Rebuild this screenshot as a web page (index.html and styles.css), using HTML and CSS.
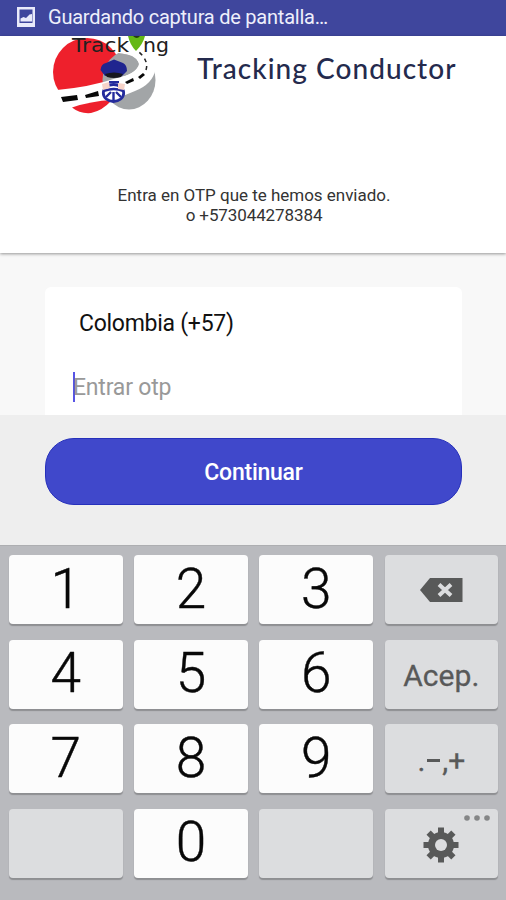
FILE: index.html
```html
<!DOCTYPE html>
<html lang="es">
<head>
<meta charset="utf-8">
<title>Tracking Conductor</title>
<link rel="stylesheet" href="styles.css">
</head>
<body>
<div class="status">
  <svg class="status-icon" width="20" height="22" viewBox="0 0 20 22"><path fill="#e9eafa" fill-rule="evenodd" d="M1 1h18v20H1z M3.500 3.500v13.500h13V3.500z"/><path fill="#e9eafa" d="M4.500 15.500v-3l3-1.500 2.500 1 3.500-3.500 2.500-.5v7.500z"/></svg>
  <span class="status-text">Guardando captura de pantalla…</span>
</div>
<header class="header">
  <div class="brand">
    <svg class="logo" width="124" height="80" viewBox="50 36 124 80">
      <circle cx="87" cy="72" r="34" fill="#ee202c"/>
      <ellipse cx="129" cy="80" rx="26.500" ry="29.500" fill="#a2a5a7"/>
      <path d="M117 36H174V80L155.500 69Q153 84 135 91Q120 98 104 102L108 111L50 120V92.500L57 90Q90 87 117 78Q137 73 139 64Q136 55 118 53L113 48Z" fill="#fff"/>
      <path d="M118 54Q134 53 138 62Q139 71 124 76Z" fill="#a2a5a7"/>
      <path d="M72 107.500Q91 101 112 100Q102 111 91 113Q80 114 72 107.500Z" fill="#ee202c"/>
      <path d="M61 97L77 95L78 100L63 102ZM85 95L98 91L99 96L86 98ZM105 88L119 84L119 88L106 91ZM125 82L133 78L134 81L127 84ZM138 77L143 73L145 75L140 79Z" fill="#080808"/>
      <path d="M146 70Q149 61 139 52" fill="none" stroke="#222" stroke-width="1.500" stroke-dasharray="4 4"/>
      <path d="M100.500 70Q101 64 106 63L114 59.500L123 63Q127 65 127 71L122 76H105Z" fill="#20258f"/>
      <path d="M105 74Q114 71 123 74L121 77Q114 79 107 77Z" fill="#17171f"/>
      <path d="M109 81H119V83.500H109Z" fill="#242b9c"/>
      <ellipse cx="113.500" cy="93" rx="10.200" ry="8.500" fill="#fff" stroke="#242b9c" stroke-width="2.800"/>
      <path d="M104 91Q114 87 123 91M113.500 92V101M106 97L111 92M121 97L116 92" fill="none" stroke="#242b9c" stroke-width="2.400"/>
      <path d="M102 84L109 82L110 88L103 90ZM118 83L125 84L124 90L118 89Z" fill="#f7d3c8"/>
      <text class="logo-text" x="72" y="51.500" textLength="57" lengthAdjust="spacingAndGlyphs">Track</text>
      <text class="logo-text" x="143" y="51.500" textLength="26" lengthAdjust="spacingAndGlyphs">ng</text>
      <path d="M128 36H145Q143 44 136 51Q130 45 128 36Z" fill="#64b816"/>
      <path d="M133 36H140Q137 40 133 36Z" fill="#263b12"/>
    </svg>
    <h1 class="title">Tracking Conductor</h1>
  </div>
  <p class="message"><span class="line-a">Entra en OTP que te hemos enviado.</span><br><span class="line-b">o +573044278384</span></p>
</header>
<main class="form">
  <div class="card">
    <div class="country">Colombia (+57)</div>
    <div class="field"><i class="caret"></i><span class="placeholder">Entrar otp</span></div>
  </div>
</main>
<div class="action"><button class="continue">Continuar</button></div>
<div class="keyboard">
  <div class="key">1</div><div class="key">2</div><div class="key">3</div>
  <div class="key alt"><svg width="44" height="24" viewBox="0 0 44 24"><path fill="#585959" d="M1 12L11 0H43.500V24H11Z"/><path d="M20 6.500L32 17.500M32 6.500L20 17.500" stroke="#dcdddf" stroke-width="4"/></svg></div>
  <div class="key">4</div><div class="key">5</div><div class="key">6</div>
  <div class="key alt accept">Acep.</div>
  <div class="key">7</div><div class="key">8</div><div class="key">9</div>
  <div class="key alt symbols">.<svg class="dash" width="13" height="3"><path d="M0 0h13v3H0z" fill="#585959"/></svg>,+</div>
  <div class="key alt"></div><div class="key">0</div><div class="key alt"></div>
  <div class="key alt settings">
    <svg class="gear" width="36" height="36" viewBox="-18 -18 36 36"><g fill="#585959"><path id="tooth" d="M-3-17.500H3V17.500H-3Z"/><use href="#tooth" transform="rotate(45)"/><use href="#tooth" transform="rotate(90)"/><use href="#tooth" transform="rotate(135)"/><circle r="13"/></g><circle r="6" fill="#dcdddf"/></svg>
    <svg class="dots" width="26" height="6" viewBox="0 0 26 6" fill="#858687"><circle cx="3" cy="3" r="2.800"/><circle cx="13" cy="3" r="2.800"/><circle cx="23" cy="3" r="2.800"/></svg>
  </div>
</div>
</body>
</html>
```

FILE: styles.css
```css
* { box-sizing: border-box; }
body {
  margin: 0;
  width: 506px;
  height: 900px;
  overflow: hidden;
  display: flex;
  flex-direction: column;
  background: #f8f8f8;
  font-family: Roboto, "Liberation Sans", sans-serif;
  color: #111;
}
.status {
  height: 36px;
  flex: none;
  display: flex;
  align-items: center;
  padding: 0 0 3px 16px;
  background: #3f469d;
  color: #eeeffb;
}
.status-icon { margin-right: 12px; }
.status-text { font-size: 20px; line-height: 24px; white-space: nowrap; letter-spacing: -0.23px; }
.header {
  height: 217px;
  flex: none;
  background: #fff;
  box-shadow: 0 1px 3px rgba(0, 0, 0, 0.4);
}
.brand { display: flex; height: 149px; padding-left: 50px; }
.logo { flex: none; overflow: visible; }
.logo-text { font: 19px "DejaVu Sans", sans-serif; fill: #202020; }
.title {
  margin: 13px 0 0 23px;
  font: 500 28px/38px Lato, sans-serif;
  letter-spacing: 1.05px;
  color: #242a4d;
  white-space: nowrap;
}
.message { margin: 0; padding-left: 2px; text-align: center; font-size: 17px; line-height: 20px; color: #333; }
.line-a { letter-spacing: -0.02px; }
.line-b { letter-spacing: -0.1px; }
.form { height: 162px; flex: none; padding: 34px 44px 0 45px; }
.card { height: 128px; border-radius: 6px 6px 0 0; background: #fff; padding: 22px 28px 0; }
.country { margin-left: 6px; font-size: 23px; line-height: 30px; letter-spacing: -0.27px; }
.field { display: flex; align-items: center; height: 30px; margin-top: 33px; }
.caret { width: 2px; height: 30px; background: #5754e5; }
.placeholder { padding-top: 2px; font-size: 23px; line-height: 30px; color: #999; margin-left: -2px; letter-spacing: -0.2px; }
.action { height: 130px; flex: none; padding: 23px 44px 0 45px; background: #eee; }
.continue {
  display: block;
  width: 417px;
  height: 67px;
  padding-top: 3px;
  border: 1px solid #2630bb;
  border-radius: 29px;
  background: #4048cb;
  color: #fff;
  font: 500 23px/30px Roboto, sans-serif;
  letter-spacing: -0.25px;
}
.keyboard {
  height: 355px;
  flex: none;
  display: grid;
  grid-template-columns: repeat(4, 113.6px);
  grid-auto-rows: 69px;
  gap: 15.5px 11.6px;
  padding: 9px 0 0 9px;
  background: #b9babe;
  border-top: 1px solid #adaeb1;
}
.key {
  position: relative;
  display: flex;
  align-items: center;
  justify-content: center;
  border-radius: 4px;
  background: #fcfcfc;
  box-shadow: 0 2px 1px #8e8f92;
  font-size: 55px;
  font-weight: 300;
  line-height: 64px;
  color: #080808;
  padding-bottom: 2px;
  -webkit-text-stroke: 0.4px #080808;
}
.alt { background: #dcdddf; color: #585959; padding-bottom: 0; -webkit-text-stroke: 0.3px #585959; }
.accept { font-size: 30px; font-weight: 400; padding-top: 4px; letter-spacing: 0.1px; }
.symbols { font-size: 30px; font-weight: 400; padding-top: 4px; }
.dash { margin: 0 2px 0 2px; }
.gear { margin-top: 3px; }
.dots { position: absolute; top: 6px; right: 8px; }
```
